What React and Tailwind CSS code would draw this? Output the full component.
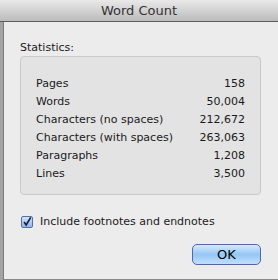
const stats = [
  ['Pages', '158'],
  ['Words', '50,004'],
  ['Characters (no spaces)', '212,672'],
  ['Characters (with spaces)', '263,063'],
  ['Paragraphs', '1,208'],
  ['Lines', '3,500'],
]

const App = () => {
  return (
    <div
      className="w-[278px] h-[280px] flex flex-col bg-[#ececec] text-[#1a1a1a] overflow-hidden"
      style={{ fontFamily: '"DejaVu Sans", "Liberation Sans", sans-serif' }}
    >
      <div className="h-[22px] shrink-0 flex items-center justify-center bg-gradient-to-b from-[#e9e9e9] to-[#bcbcbc] border-b border-[#5c5c5c]">
        <span className="text-[13px] text-[#333] leading-none">Word Count</span>
      </div>
      <div className="flex flex-1">
        <div className="w-[4px] bg-[#a3a3a3] border-r border-[#7d7d7d]" />
        <div className="flex-1 flex flex-col pl-[16px] pr-[17px] border-b border-[#8a8a8a]">
          <div className="text-[11px] mt-[19px] leading-[13px]">Statistics:</div>
          <div className="mt-[2px] h-[139px] bg-[#e3e3e3] border border-[#c9c9c9] rounded-[4px] pl-[15px] pr-[15px] pt-[18px]">
            {stats.map(([label, value]) => (
              <div key={label} className="flex justify-between text-[11px] h-[18px] leading-[18px]">
                <span>{label}</span>
                <span>{value}</span>
              </div>
            ))}
          </div>
          <label className="flex items-center gap-[7px] mt-[19px] pl-[1px] text-[11px]">
            <span className="w-[12px] h-[12px] rounded-[2px] border border-[#5b6f9c] bg-gradient-to-b from-[#cfe3fb] to-[#8fb6ec] flex items-center justify-center">
              <svg width="12" height="12" viewBox="0 0 12 12">
                <path d="M2.5 6 L5 9.5 L10.5 0.5" fill="none" stroke="#1a1f3a" strokeWidth="2" />
              </svg>
            </span>
            <span>Include footnotes and endnotes</span>
          </label>
          <div className="flex justify-end mt-[13px]">
            <button className="w-[69px] h-[21px] rounded-[5px] border border-[#5467a3] bg-gradient-to-b from-[#d6e8fc] via-[#95c6f5] to-[#c0e0fc] text-[13px] text-black leading-none">
              OK
            </button>
          </div>
        </div>
      </div>
    </div>
  )
}

export default App
